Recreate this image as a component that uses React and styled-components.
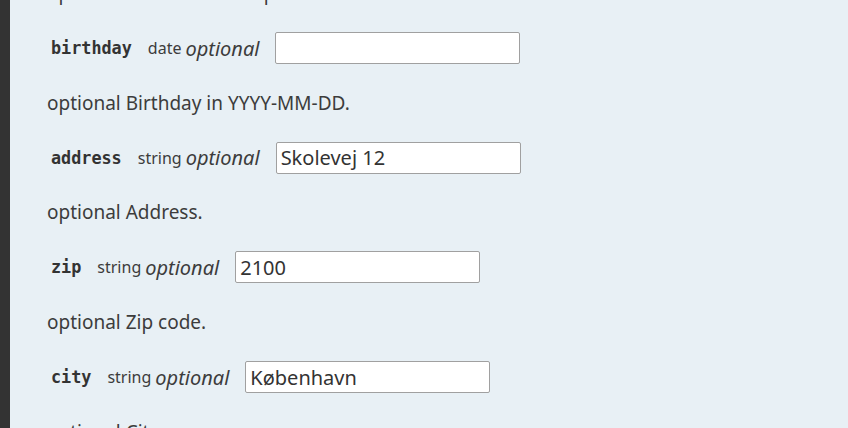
import React from 'react'
import styled, { createGlobalStyle } from 'styled-components'

const GlobalStyle = createGlobalStyle`
  html, body {
    margin: 0;
    padding: 0;
    height: 100%;
    overflow: hidden;
    background: #e8f0f5;
  }
  #root {
    height: 100%;
  }
`

const Page = styled.div`
  display: flex;
  height: 100%;
  font-family: 'Noto Sans', 'Open Sans', sans-serif;
  color: #3c3c3c;
`

const Sidebar = styled.div`
  width: 10px;
  flex: none;
  background: #333333;
`

const Content = styled.div`
  flex: 1;
  padding-left: 37px;
  margin-top: -19px;
`

const Desc = styled.p`
  margin: 0;
  font-size: 19px;
  line-height: 24px;
  height: 24px;
  white-space: nowrap;
`

const Field = styled.div`
  padding: 27px 0 0;

  ${Desc} {
    margin-top: 26.7px;
  }
`

const Row = styled.div`
  display: flex;
  align-items: center;
  height: 32px;
  padding-left: 4px;
`

const Name = styled.code`
  font-family: 'DejaVu Sans Mono', monospace;
  font-weight: bold;
  font-size: 16.8px;
  color: #333;
  margin-right: 16px;
`

const Type = styled.span`
  font-size: 16px;
  margin-right: 4px;
`

const Optional = styled.em`
  font-size: 20px;
  margin-right: 16px;
`

const Input = styled.input`
  box-sizing: border-box;
  width: 245px;
  height: 32px;
  border: 1px solid #a0a0a0;
  border-radius: 2px;
  background: #fff;
  padding: 0 4px;
  font-family: 'Noto Sans', 'Open Sans', sans-serif;
  font-size: 20px;
  color: #333;
  outline: none;
`

const fields = [
  { name: 'birthday', type: 'date', value: '', desc: 'optional Birthday in YYYY-MM-DD.' },
  { name: 'address', type: 'string', value: 'Skolevej 12', desc: 'optional Address.' },
  { name: 'zip', type: 'string', value: '2100', desc: 'optional Zip code.' },
  { name: 'city', type: 'string', value: 'København', desc: 'optional City.' },
]

export default function App() {
  return (
    <>
      <GlobalStyle />
      <Page>
        <Sidebar />
        <Content>
          <Desc>optional Name of the department.</Desc>
          {fields.map((f) => (
            <Field key={f.name}>
              <Row>
                <Name>{f.name}</Name>
                <Type>{f.type}</Type>
                <Optional>optional</Optional>
                <Input defaultValue={f.value} />
              </Row>
              <Desc>{f.desc}</Desc>
            </Field>
          ))}
        </Content>
      </Page>
    </>
  )
}
